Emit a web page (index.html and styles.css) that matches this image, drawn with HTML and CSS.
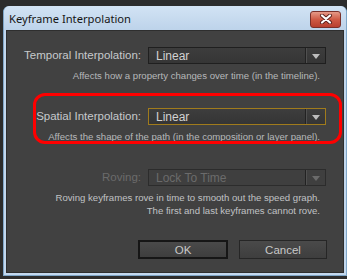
FILE: index.html
```html
<!DOCTYPE html>
<html>
<head>
    <title>Keyframe Interpolation</title>
    <link rel="stylesheet" href="styles.css">
</head>
<body>
    <div class="window">
        <div class="titlebar">
            <span class="title">Keyframe Interpolation</span>
            <button class="close">
                <svg width="14" height="10" viewBox="0 0 14 10">
                    <path d="M3 1.5 L11 8.5 M11 1.5 L3 8.5" stroke="#5a1f1a" stroke-width="4" stroke-linecap="round"/>
                    <path d="M3 1.5 L11 8.5 M11 1.5 L3 8.5" stroke="#fff" stroke-width="2.2" stroke-linecap="round"/>
                </svg>
            </button>
        </div>
        <div class="content">
            <div class="group">
                <div class="field">
                    <label>Temporal Interpolation:</label>
                    <div class="select"><span>Linear</span><span class="arrow"></span></div>
                </div>
                <p class="hint">Affects how a property changes over time (in the timeline).</p>
            </div>

            <div class="group spatial">
                <div class="field">
                    <label>Spatial Interpolation:</label>
                    <div class="select focused"><span>Linear</span><span class="arrow"></span></div>
                </div>
                <p class="hint">Affects the shape of the path (in the composition or layer panel).</p>
                <div class="ring"></div>
            </div>

            <div class="group disabled">
                <div class="field">
                    <label>Roving:</label>
                    <div class="select"><span>Lock To Time</span><span class="arrow"></span></div>
                </div>
                <p class="hint">Roving keyframes rove in time to smooth out the speed graph.<br>The first and last keyframes cannot rove.</p>
            </div>

            <div class="buttons">
                <button class="btn default">OK</button>
                <button class="btn">Cancel</button>
            </div>
        </div>
    </div>
</body>
</html>
```

FILE: styles.css
```css
body {
    margin: 0;
    background-color: #2c2c2c;
    font-family: 'Liberation Sans', Arial, sans-serif;
}

.window {
    margin: 6px 0 0 3px;
    width: 342px;
    border: 1px solid #7fa6c8;
    border-top: 0;
    border-radius: 6px 6px 0 0;
    background-color: #c3d8ee;
    box-shadow: 0 1px 0 #3ab4dd;
}

.titlebar {
    display: flex;
    align-items: center;
    justify-content: space-between;
    height: 24px;
    padding: 0 5px 0 5px;
    border-radius: 6px 6px 0 0;
    background: linear-gradient(#d2e3f4, #bdd3ea);
}

.title {
    font-family: 'Noto Sans', sans-serif;
    font-size: 11.2px;
    color: #151515;
}

.close {
    display: flex;
    align-items: center;
    justify-content: center;
    width: 31px;
    height: 17px;
    margin-top: 2px;
    padding: 0;
    border: 1px solid #7a302a;
    border-radius: 3px;
    background: linear-gradient(#e59a88, #cf5a45 50%, #b8402f);
}

.content {
    margin: 0 2px 2px 2px;
    padding: 16px 16px 13px 0;
    background-color: #414141;
    border: 1px solid #2e2e2e;
}

.group {
    position: relative;
    margin-bottom: 26px;
}

.field {
    display: grid;
    grid-template-columns: 134px 178px;
    column-gap: 7px;
    align-items: center;
}

.field label {
    text-align: right;
    font-size: 11.5px;
    line-height: 17px;
    color: #c6c9cc;
}

.select {
    display: flex;
    align-items: center;
    height: 15px;
    border: 1px solid #1f1f1f;
    background: linear-gradient(#3d3d3d, #353535);
    font-size: 12px;
    color: #d2d2d2;
}

.select span:first-child {
    flex: 1;
    padding-left: 7px;
}

.select .arrow {
    position: relative;
    width: 19px;
    height: 100%;
    border-left: 1px solid #222;
    box-shadow: inset 1px 0 0 #505050;
}

.select .arrow::after {
    content: '';
    position: absolute;
    left: 6px;
    top: 6px;
    border-left: 4px solid transparent;
    border-right: 4px solid transparent;
    border-top: 5px solid #bdbdbd;
}

.select.focused {
    border-color: #a07b1c;
}

.hint {
    margin: 6px 7px 0 0;
    text-align: right;
    font-size: 9.6px;
    line-height: 12px;
    color: #b6b8ba;
}

.disabled .field label,
.disabled .select {
    color: #6b6b6b;
}

.disabled .select {
    border-color: #2c2c2c;
    background: #3f3f3f;
}

.disabled .select .arrow::after {
    border-top-color: #6b6b6b;
}

.disabled .hint {
    margin-top: 5px;
    line-height: 13px;
    color: #c0c2c4;
}

.ring {
    position: absolute;
    left: 26px;
    top: -15px;
    width: 303px;
    height: 45px;
    border: 3px solid #f00;
    border-radius: 12px;
}

.buttons {
    display: flex;
    justify-content: flex-end;
    gap: 11px;
    margin-top: -3px;
}

.btn {
    width: 88px;
    height: 19px;
    padding: 0;
    border: 1px solid #262626;
    background: linear-gradient(#4a4a4a, #3e3e3e);
    font-family: 'Liberation Sans', sans-serif;
    font-size: 11.5px;
    color: #c8c8c8;
}

.btn.default {
    width: 90px;
    border: 2px solid #161616;
}
```
